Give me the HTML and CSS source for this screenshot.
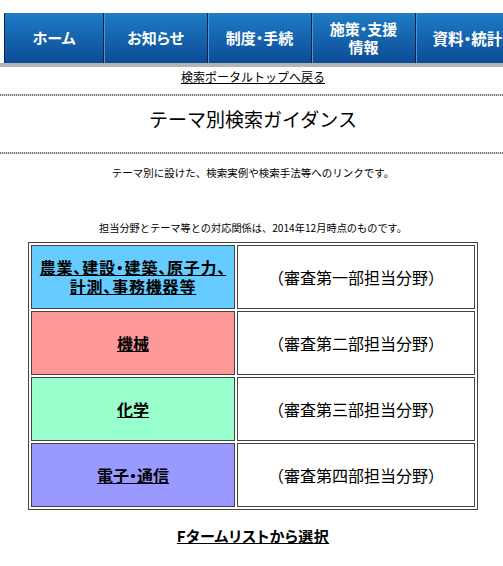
FILE: index.html
```html
<!DOCTYPE html>
<html lang="ja">
<head>
<meta charset="utf-8">
<title>テーマ別検索ガイダンス</title>
<link rel="stylesheet" href="styles.css">
</head>
<body>
<header class="header">
  <nav class="nav">
    <a class="nav-item" href="#">ホーム</a>
    <a class="nav-item" href="#">お知らせ</a>
    <a class="nav-item" href="#">制度・手続</a>
    <a class="nav-item nav-two" href="#">施策・支援<br>情報</a>
    <a class="nav-item" href="#">資料・統計</a>
    <a class="nav-item" href="#">特許庁について</a>
  </nav>
  <div class="nav-bar"></div>
</header>
<main class="page">
  <div class="back"><a href="#">検索ポータルトップへ戻る</a></div>
  <div class="rule"></div>
  <h1 class="title">テーマ別検索ガイダンス</h1>
  <div class="rule"></div>
  <p class="lead">テーマ別に設けた、検索実例や検索手法等へのリンクです。</p>
  <p class="note">担当分野とテーマ等との対応関係は、2014年12月時点のものです。</p>
  <table class="themes">
    <tr>
      <td class="field c-blue"><a class="wide" href="#">農業、建設・建築、原子力、<br>計測、事務機器等</a></td>
      <td class="dept">（審査第一部担当分野）</td>
    </tr>
    <tr>
      <td class="field c-red"><a href="#">機械</a></td>
      <td class="dept">（審査第二部担当分野）</td>
    </tr>
    <tr>
      <td class="field c-green"><a href="#">化学</a></td>
      <td class="dept">（審査第三部担当分野）</td>
    </tr>
    <tr>
      <td class="field c-purple"><a href="#">電子・通信</a></td>
      <td class="dept">（審査第四部担当分野）</td>
    </tr>
  </table>
  <div class="fterm"><a href="#">Fタームリストから選択</a></div>
</main>
</body>
</html>
```
FILE: styles.css
```css
html, body {
  margin: 0;
  padding: 0;
  background: #fff;
  overflow: hidden;
}
body {
  font-family: "Noto Sans CJK JP", "Noto Sans", sans-serif;
  color: #000;
  width: 503px;
}
a { color: #000; }

.header {
  padding-top: 13px;
}
.nav {
  display: flex;
  margin-left: 4px;
  height: 50px;
  border-left: 1px solid #0a2450;
  overflow: hidden;
  background: linear-gradient(#1f7cc6, #0d4b95);
}
.nav-item {
  flex: none;
  width: 103px;
  display: flex;
  align-items: center;
  justify-content: center;
  text-align: center;
  color: #fff;
  font-weight: bold;
  font-size: 15px;
  line-height: 18px;
  text-decoration: none;
  font-feature-settings: "palt";
  border-right: 1px solid #0a2450;
  box-shadow: inset 1px 0 0 #4f94cf;
}
.nav-item:first-child { width: 98px; box-shadow: none; }
.nav-item:nth-child(5) { font-size: 15.5px; }
.nav-bar {
  height: 4px;
  background: #b4b4b4;
}

.page {
  width: 506px;
  text-align: center;
}
.back {
  font-size: 12px;
  line-height: 16px;
  padding: 2px 0 9px;
}
.rule {
  height: 2px;
  background: repeating-linear-gradient(90deg, #7a7a7a 0 1px, #d8d8d8 1px 2px);
}
.title {
  margin: 0;
  font-weight: normal;
  font-size: 19px;
  line-height: 24px;
  padding: 11px 0 21px;
}
.lead {
  margin: 12px 0 0;
  font-size: 10.5px;
  line-height: 14px;
}
.note {
  margin: 41px 0 0;
  font-size: 10.2px;
  line-height: 14px;
}
.themes {
  margin: 7px auto 0;
  border-collapse: separate;
  border-spacing: 2px;
  border: 1px solid #444;
  width: 450px;
}
.themes td {
  border: 1px solid #444;
  height: 62px;
  padding: 0;
  text-align: center;
  vertical-align: middle;
  font-size: 16px;
  line-height: 19px;
}
.field {
  width: 202px;
  font-weight: bold;
  font-feature-settings: "palt";
}
.wide {
  letter-spacing: 0.8px;
}
.dept {
  width: 236px;
}
.c-blue { background: #66ccff; }
.c-red { background: #ff9999; }
.c-green { background: #99ffcc; }
.c-purple { background: #9999ff; }

.fterm {
  margin-top: 16px;
  font-size: 15px;
  line-height: 20px;
  font-weight: bold;
  font-feature-settings: "palt";
  letter-spacing: 0.4px;
}
```
